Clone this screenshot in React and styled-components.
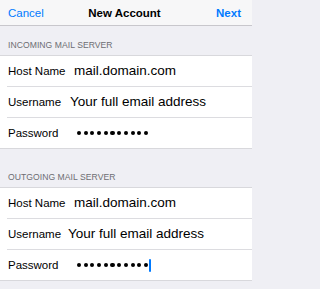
import React from "react";
import styled, { createGlobalStyle } from "styled-components";

const GlobalStyle = createGlobalStyle`
	html, body {
		margin: 0;
		padding: 0;
		background: #efeff4;
		font-family: "Liberation Sans", Arial, sans-serif;
		-webkit-font-smoothing: antialiased;
	}
	#root {
		min-height: 100vh;
	}
`;

const Screen = styled.div`
	width: 252px;
	min-height: 289px;
	background: #efeff4;
	overflow: hidden;
`;

const NavBar = styled.div`
	height: 25px;
	display: grid;
	grid-template-columns: 1fr auto 1fr;
	align-items: center;
	padding: 0 11px 0 8px;
	background: #f7f7f8;
	border-bottom: 1px solid #c8c7cc;
`;

const NavButton = styled.span`
	justify-self: ${(p) => (p.$right ? "end" : "start")};
	color: #007aff;
	font-size: 11.5px;
	font-weight: ${(p) => (p.$right ? 600 : 400)};
	line-height: 14px;
`;

const Title = styled.span`
	color: #000;
	font-size: 11.5px;
	font-weight: 600;
	line-height: 14px;
`;

const SectionHeader = styled.div`
	height: ${(p) => p.$height}px;
	display: flex;
	align-items: flex-end;
	padding: 0 8px 5px;
	box-sizing: border-box;
	color: #6d6d72;
	font-size: 8.6px;
	line-height: 10px;
	letter-spacing: 0.05px;
`;

const Group = styled.div`
	background: #fff;
	border-top: 1px solid #d8d8dc;
	border-bottom: 1px solid #d8d8dc;
`;

const Row = styled.div`
	height: 30px;
	display: flex;
	align-items: center;
	margin-left: 7px;
	padding-left: 1px;
	border-top: ${(p) => (p.$first ? "none" : "1px solid #dcdce0")};
`;

const Label = styled.span`
	width: 62px;
	flex-shrink: 0;
	color: #000;
	font-size: 11.5px;
	line-height: 14px;
	white-space: nowrap;
`;

const Value = styled.span`
	margin-left: ${(p) => p.$shift}px;
	color: #000;
	font-size: 13.5px;
	line-height: 16px;
	white-space: nowrap;
`;

const Dots = styled.div`
	margin-left: ${(p) => p.$shift}px;
	display: flex;
	align-items: center;
	gap: 2.6px;
`;

const Dot = styled.span`
	width: 4.1px;
	height: 4.1px;
	border-radius: 50%;
	background: #000;
`;

const Cursor = styled.span`
	width: 1.5px;
	height: 13px;
	margin-left: -1.2px;
	background: #007aff;
	border-radius: 1px;
`;

function Password({ length, focused, shift }) {
	return (
		<Dots $shift={shift}>
			{Array.from({ length }).map((_, i) => (
				<Dot key={i} />
			))}
			{focused && <Cursor />}
		</Dots>
	);
}

function ServerGroup({ focused, userShift }) {
	return (
		<Group>
			<Row $first>
				<Label>Host Name</Label>
				<Value $shift={4}>mail.domain.com</Value>
			</Row>
			<Row>
				<Label>Username</Label>
				<Value $shift={userShift}>Your full email address</Value>
			</Row>
			<Row>
				<Label>Password</Label>
				<Password length={11} focused={focused} shift={7} />
			</Row>
		</Group>
	);
}

export default function App() {
	return (
		<Screen>
			<GlobalStyle />
			<NavBar>
				<NavButton>Cancel</NavButton>
				<Title>New Account</Title>
				<NavButton $right>Next</NavButton>
			</NavBar>
			<SectionHeader $height={29}>INCOMING MAIL SERVER</SectionHeader>
			<ServerGroup userShift={0} />
			<SectionHeader $height={38}>OUTGOING MAIL SERVER</SectionHeader>
			<ServerGroup userShift={-2} focused />
		</Screen>
	);
}
